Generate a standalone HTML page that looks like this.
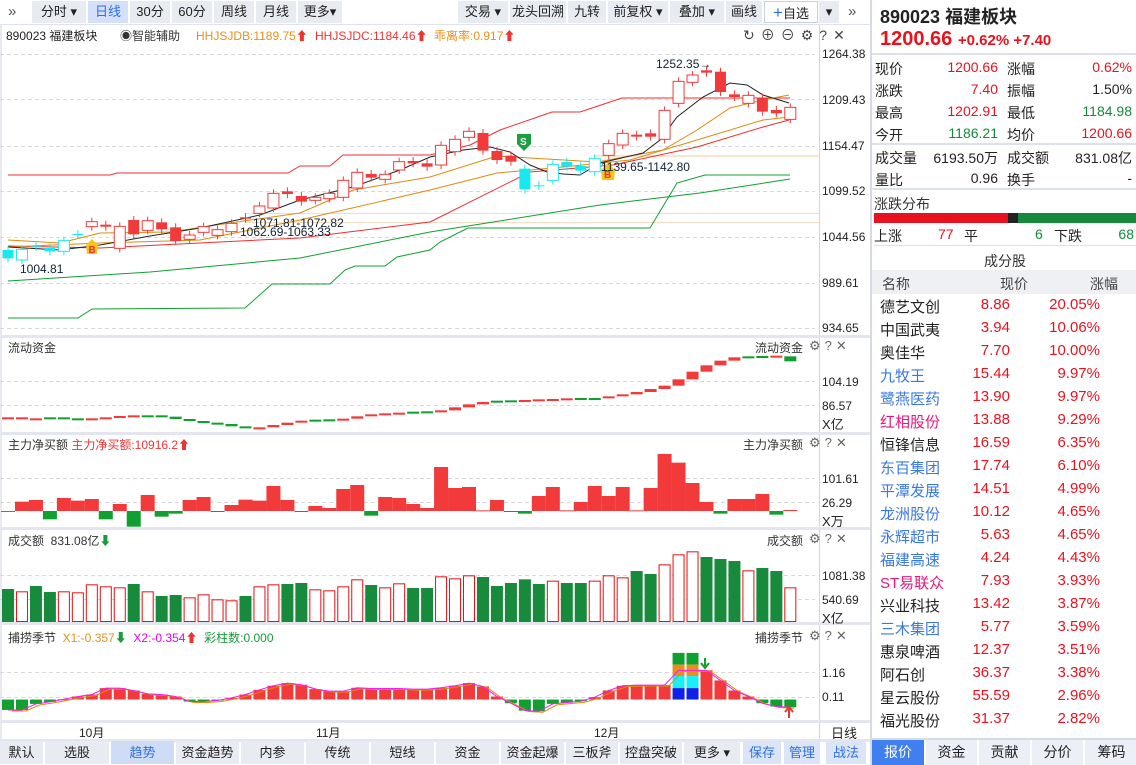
<!DOCTYPE html>
<html><head><meta charset="utf-8">
<style>
*{margin:0;padding:0;box-sizing:border-box}
body{width:1136px;height:765px;overflow:hidden;background:#fff;font-family:"Liberation Sans","Noto Sans CJK SC",sans-serif;font-size:13px;color:#222;position:relative}
.a{position:absolute;white-space:nowrap}
#top{position:absolute;left:0;top:0;width:870px;height:25px;background:#fff;border-bottom:1px solid #dfe3ec}
.tb{position:absolute;top:1px;height:22px;line-height:22px;background:#e8ebf2;text-align:center;font-size:13px;color:#222}
#rp{position:absolute;left:870px;top:0;width:266px;height:765px;border-left:2px solid #d5dae6;background:#fff}
.r{position:absolute;font-size:14px}
.sep{position:absolute;left:0;width:266px;height:2px;background:#dde1ea}
.bt{position:absolute;top:741px;height:23px;line-height:23px;background:#e8ebf2;text-align:center;font-size:13px}
.ph{font-size:12px;color:#333}
</style></head><body>
<div id="top">
<div class="a" style="left:8px;top:3px;font-size:15px;color:#555">»</div>
<div class="tb" style="left:32px;width:54px">分时 ▾</div>
<div class="tb" style="left:88px;width:40px;background:#d3e0f7;color:#2f6fe0">日线</div>
<div class="tb" style="left:130px;width:40px">30分</div>
<div class="tb" style="left:172px;width:40px">60分</div>
<div class="tb" style="left:214px;width:40px">周线</div>
<div class="tb" style="left:256px;width:40px">月线</div>
<div class="tb" style="left:298px;width:44px">更多▾</div>
<div class="tb" style="left:458px;width:50px">交易 ▾</div>
<div class="tb" style="left:510px;width:56px">龙头回溯</div>
<div class="tb" style="left:568px;width:38px">九转</div>
<div class="tb" style="left:608px;width:60px">前复权 ▾</div>
<div class="tb" style="left:670px;width:54px">叠加 ▾</div>
<div class="tb" style="left:726px;width:36px">画线</div>
<div class="tb" style="left:764px;width:54px;background:#fff;border:1px solid #c8d0e0"><span style="color:#2f6fe0;font-size:17px">+</span>自选</div>
<div class="tb" style="left:819px;width:20px">▾</div>
<div class="a" style="left:848px;top:3px;font-size:15px;color:#555">»</div>
</div>
<div class="a ph" style="left:6px;top:27px;font-size:12px;color:#222">890023 福建板块</div>
<div class="a ph" style="left:120px;top:27px">◉智能辅助</div>
<div class="a" style="left:196px;top:27px;font-size:12px;color:#e8901a">HHJSJDB:1189.75<span style="color:#e33">⬆</span></div>
<div class="a" style="left:315px;top:27px;font-size:12px;color:#e33">HHJSJDC:1184.46⬆</div>
<div class="a" style="left:434px;top:27px;font-size:12px;color:#e8901a">乖离率:0.917<span style="color:#e33">⬆</span></div>
<div class="a" style="left:743px;top:25px;font-size:14px;color:#444;letter-spacing:6px">↻⊕⊖⚙?✕</div>

<svg id="ch" class="a" style="left:0;top:0" width="870" height="765" xmlns="http://www.w3.org/2000/svg"></svg>

<div class="a ph" style="left:8px;top:339px">流动资金</div>
<div class="a ph" style="left:755px;top:339px">流动资金</div>
<div class="a ph" style="left:8px;top:436px">主力净买额 <span style="color:#e33">主力净买额:10916.2⬆</span></div>
<div class="a ph" style="left:743px;top:436px">主力净买额</div>
<div class="a ph" style="left:8px;top:532px">成交额 &nbsp;831.08亿<span style="color:#1a9a3a">⬇</span></div>
<div class="a ph" style="left:767px;top:532px">成交额</div>
<div class="a ph" style="left:8px;top:629px">捕捞季节 &nbsp;<span style="color:#e8901a">X1:-0.357</span><span style="color:#1a9a3a">⬇</span> &nbsp;<span style="color:#e0e">X2:-0.354</span><span style="color:#e33">⬆</span> &nbsp;<span style="color:#1a9a3a">彩柱数:0.000</span></div>
<div class="a ph" style="left:755px;top:629px">捕捞季节</div>
<div class="a" style="left:809px;top:338px;font-size:13px;color:#666;letter-spacing:4px">⚙?✕</div>
<div class="a" style="left:809px;top:435px;font-size:13px;color:#666;letter-spacing:4px">⚙?✕</div>
<div class="a" style="left:809px;top:531px;font-size:13px;color:#666;letter-spacing:4px">⚙?✕</div>
<div class="a" style="left:809px;top:628px;font-size:13px;color:#666;letter-spacing:4px">⚙?✕</div>
<div class="a" style="left:822px;top:47px;font-size:12px">1264.38</div>
<div class="a" style="left:822px;top:93px;font-size:12px">1209.43</div>
<div class="a" style="left:822px;top:139px;font-size:12px">1154.47</div>
<div class="a" style="left:822px;top:184px;font-size:12px">1099.52</div>
<div class="a" style="left:822px;top:230px;font-size:12px">1044.56</div>
<div class="a" style="left:822px;top:276px;font-size:12px">989.61</div>
<div class="a" style="left:822px;top:321px;font-size:12px">934.65</div>
<div class="a" style="left:822px;top:375px;font-size:12px">104.19</div>
<div class="a" style="left:822px;top:399px;font-size:12px">86.57</div>
<div class="a" style="left:822px;top:414px;font-size:13px">X亿</div>
<div class="a" style="left:822px;top:472px;font-size:12px">101.61</div>
<div class="a" style="left:822px;top:496px;font-size:12px">26.29</div>
<div class="a" style="left:822px;top:511px;font-size:13px">X万</div>
<div class="a" style="left:822px;top:569px;font-size:12px">1081.38</div>
<div class="a" style="left:822px;top:593px;font-size:12px">540.69</div>
<div class="a" style="left:822px;top:608px;font-size:13px">X亿</div>
<div class="a" style="left:822px;top:666px;font-size:12px">1.16</div>
<div class="a" style="left:822px;top:690px;font-size:12px">0.11</div>
<div class="a" style="left:79px;top:724px;font-size:12px">10月</div>
<div class="a" style="left:316px;top:724px;font-size:12px">11月</div>
<div class="a" style="left:594px;top:724px;font-size:12px">12月</div>
<div class="a" style="left:831px;top:723px;font-size:13px">日线</div>
<div class="a" style="left:20px;top:262px;font-size:12px;color:#123">1004.81</div>
<div class="a" style="left:253px;top:216px;font-size:12px;color:#123">1071.81-1072.82</div>
<div class="a" style="left:240px;top:225px;font-size:12px;color:#123">1062.69-1063.33</div>
<div class="a" style="left:601px;top:160px;font-size:12px;color:#123">1139.65-1142.80</div>
<div class="a" style="left:656px;top:57px;font-size:12px;color:#123">1252.35→</div>

<div class="bt" style="left:0;width:43px">默认</div>
<div class="bt" style="left:45px;width:64px">选股</div>
<div class="bt" style="left:111px;width:63px;background:#cfdcf5;color:#2f6fe0">趋势</div>
<div class="bt" style="left:176px;width:63px">资金趋势</div>
<div class="bt" style="left:241px;width:63px">内参</div>
<div class="bt" style="left:306px;width:63px">传统</div>
<div class="bt" style="left:371px;width:63px">短线</div>
<div class="bt" style="left:436px;width:63px">资金</div>
<div class="bt" style="left:501px;width:63px">资金起爆</div>
<div class="bt" style="left:566px;width:52px">三板斧</div>
<div class="bt" style="left:620px;width:62px">控盘突破</div>
<div class="bt" style="left:684px;width:56px">更多 ▾</div>
<div class="bt" style="left:743px;width:38px;background:#dbe5f7;color:#2f6fe0">保存</div>
<div class="bt" style="left:784px;width:36px;background:#dbe5f7;color:#2f6fe0">管理</div>
<div class="bt" style="left:826px;width:40px;background:#dbe5f7;color:#2f6fe0">战法</div>

<div id="rp">
<div class="r" style="left:8px;top:3px;font-size:18px;font-weight:bold">890023 福建板块</div>
<div class="r" style="left:8px;top:28px;font-size:20px;font-weight:bold;color:#e8121e">1200.66 <span style="font-size:15px">+0.62% +7.40</span></div>
<div class="sep" style="top:53px"></div>
<div class="r" style="left:3px;top:59px">现价</div><div class="r" style="right:138px;top:59px;color:#e8121e">1200.66</div>
<div class="r" style="left:135px;top:59px">涨幅</div><div class="r" style="right:4px;top:59px;color:#e8121e">0.62%</div>
<div class="r" style="left:3px;top:81px">涨跌</div><div class="r" style="right:138px;top:81px;color:#e8121e">7.40</div>
<div class="r" style="left:135px;top:81px">振幅</div><div class="r" style="right:4px;top:81px">1.50%</div>
<div class="r" style="left:3px;top:103px">最高</div><div class="r" style="right:138px;top:103px;color:#e8121e">1202.91</div>
<div class="r" style="left:135px;top:103px">最低</div><div class="r" style="right:4px;top:103px;color:#128a3a">1184.98</div>
<div class="r" style="left:3px;top:125px">今开</div><div class="r" style="right:138px;top:125px;color:#128a3a">1186.21</div>
<div class="r" style="left:135px;top:125px">均价</div><div class="r" style="right:4px;top:125px;color:#e8121e">1200.66</div>
<div class="sep" style="top:143px"></div>
<div class="r" style="left:3px;top:148px">成交量</div><div class="r" style="right:138px;top:148px">6193.50万</div>
<div class="r" style="left:135px;top:148px">成交额</div><div class="r" style="right:4px;top:148px">831.08亿</div>
<div class="r" style="left:3px;top:170px">量比</div><div class="r" style="right:138px;top:170px">0.96</div>
<div class="r" style="left:135px;top:170px">换手</div><div class="r" style="right:4px;top:170px">-</div>
<div class="sep" style="top:188px"></div>
<div class="r" style="left:2px;top:194px;color:#333">涨跌分布</div>
<div class="a" style="left:2px;top:213px;width:134px;height:10px;background:#e8121e"></div>
<div class="a" style="left:136px;top:213px;width:10px;height:10px;background:#222"></div>
<div class="a" style="left:146px;top:213px;width:118px;height:10px;background:#158a3c"></div>
<div class="r" style="left:2px;top:226px">上涨</div><div class="r" style="left:66px;top:226px;color:#e8121e">77</div>
<div class="r" style="left:92px;top:226px">平</div><div class="r" style="left:163px;top:226px;color:#128a3a">6</div>
<div class="r" style="left:182px;top:226px">下跌</div><div class="r" style="right:2px;top:226px;color:#128a3a">68</div>
<div class="sep" style="top:245px;left:2px;width:262px;height:1px"></div>
<div class="r" style="left:112px;top:251px;color:#333">成分股</div>
<div class="a" style="left:0;top:270px;width:266px;height:24px;background:#eef0f4"></div>
<div class="r" style="left:10px;top:274px;color:#444">名称</div>
<div class="r" style="left:128px;top:274px;color:#444">现价</div>
<div class="r" style="left:218px;top:274px;color:#444">涨幅</div>
<div id="stk"></div>
<div class="a" style="left:0;top:738px;width:266px;height:2px;background:#d5dae6"></div>
<div class="a" style="left:0;top:740px;width:52px;height:25px;line-height:25px;text-align:center;background:#3f7ff0;color:#fff;font-size:14px">报价</div>
<div class="a" style="left:54px;top:740px;width:51px;height:25px;line-height:25px;text-align:center;background:#eceff5;font-size:14px">资金</div>
<div class="a" style="left:107px;top:740px;width:51px;height:25px;line-height:25px;text-align:center;background:#eceff5;font-size:14px">贡献</div>
<div class="a" style="left:160px;top:740px;width:51px;height:25px;line-height:25px;text-align:center;background:#eceff5;font-size:14px">分价</div>
<div class="a" style="left:213px;top:740px;width:53px;height:25px;line-height:25px;text-align:center;background:#eceff5;font-size:14px">筹码</div>
</div>

<div class="a" style="left:8px;top:296px;width:0;height:0"></div>
<div id="hid" style="display:none">
德艺文创 中国武夷 奥佳华 九牧王 鹭燕医药 红相股份 恒锋信息 东百集团 平潭发展 龙洲股份 永辉超市 福建高速 ST易联众 兴业科技 三木集团 惠泉啤酒 阿石创 星云股份 福光股份
</div>
<script>
var S=[["德艺文创","8.86","20.05%",0],["中国武夷","3.94","10.06%",0],["奥佳华","7.70","10.00%",0],["九牧王","15.44","9.97%",1],["鹭燕医药","13.90","9.97%",1],["红相股份","13.88","9.29%",2],["恒锋信息","16.59","6.35%",0],["东百集团","17.74","6.10%",1],["平潭发展","14.51","4.99%",1],["龙洲股份","10.12","4.65%",1],["永辉超市","5.63","4.65%",1],["福建高速","4.24","4.43%",1],["ST易联众","7.93","3.93%",2],["兴业科技","13.42","3.87%",0],["三木集团","5.77","3.59%",1],["惠泉啤酒","12.37","3.51%",0],["阿石创","36.37","3.38%",0],["星云股份","55.59","2.96%",0],["福光股份","31.37","2.82%",0]];
var cc=["#222","#3a78e0","#e8157e"],h="";
S.forEach(function(s,i){var t=296+i*23;h+='<div class="r" style="left:8px;top:'+t+'px;font-size:15px;color:'+cc[s[3]]+'">'+s[0]+'</div><div class="r" style="right:126px;top:'+t+'px;font-size:15px;color:#e8121e">'+s[1]+'</div><div class="r" style="right:36px;top:'+t+'px;font-size:15px;color:#e8121e">'+s[2]+'</div>';});
document.getElementById('stk').innerHTML=h;

var o="",R="#f23a3a",G="#128a3a",C="#18e8f0";
function X(i){return 8+i*13.97;}
function line(pts,col,w){o+='<polyline fill="none" stroke="'+col+'" stroke-width="'+(w||1)+'" points="'+pts.map(function(p){return p[0]+','+p[1]}).join(' ')+'"/>';}
function rect(x,y,w,hh,f,s){o+='<rect x="'+x+'" y="'+y+'" width="'+w+'" height="'+Math.max(hh,1)+'" fill="'+f+'"'+(s?' stroke="'+s+'"':'')+'/>';}
function hl(y,x1,x2,col,d){o+='<line x1="'+x1+'" y1="'+y+'" x2="'+x2+'" y2="'+y+'" stroke="'+col+'"'+(d?' stroke-dasharray="4,3"':'')+'/>';}
// frames
o+='<line x1="819.5" y1="25" x2="819.5" y2="740" stroke="#cfd4de"/>';
o+='<line x1="1" y1="25" x2="1" y2="740" stroke="#cfd4de"/>';
[336,433,528,623,721,740].forEach(function(y){o+='<rect x="0" y="'+(y-1)+'" width="870" height="3" fill="#e3e6ee"/>';});
[54,99,146,191,237,283,328].forEach(function(y){hl(y+0.5,0,815,"#d9d9d9",1)});
hl(381.5,0,815,"#d9d9d9",1);hl(405.5,0,815,"#d9d9d9",1);
hl(478.5,0,815,"#d9d9d9",1);hl(502.5,0,815,"#d9d9d9",1);
hl(575.5,0,815,"#d9d9d9",1);hl(599.5,0,815,"#d9d9d9",1);
hl(672.5,0,815,"#d9d9d9",1);hl(697.5,0,815,"#d9d9d9",1);
// beige lines
hl(213.5,245,819,"#f6dcc4");hl(222.5,245,819,"#f6dcc4");
rect(593,155,226,2,"#fbe3cc");
// bands
line([[8,175],[110,175],[117,173],[288,173],[300,166],[330,166],[343,155],[430,155],[470,145],[500,130],[552,112],[580,112],[622,98],[790,98]],"#ee3030");
line([[8,281],[150,272],[300,258],[430,232],[600,205],[700,193],[790,179]],"#10a030");
line([[8,318],[78,318],[92,309],[245,308],[272,284],[330,284],[345,270],[355,266],[385,266],[397,257],[430,250],[440,242],[468,228],[650,228],[677,183],[705,175],[790,175]],"#10a030");
// MAs
line([[8,246],[100,248],[300,238],[430,222],[530,172],[613,165],[697,147],[763,127],[789,120]],"#ee3030");
line([[8,247],[100,243],[200,240],[300,220],[430,190],[497,173],[563,167],[630,160],[697,140],[763,120],[789,117]],"#e08a10");
line([[8,240],[60,243],[100,233],[170,232],[230,223],[300,213],[353,190],[430,177],[497,156],[530,158],[597,162],[663,150],[697,130],[730,108],[763,100],[789,95]],"#e08a10");
line([[8,247],[60,250],[100,245],[150,236],[200,228],[260,215],[300,200],[353,187],[400,170],[430,157],[463,150],[490,147],[510,152],[530,165],[547,172],[563,174],[580,175],[600,163],[643,153],[660,140],[677,117],[703,97],[730,83],[747,85],[763,95],[789,103]],"#222");
// candles: [topzy,botzy,type]; real y=50+zy/3
var K=[[600,625,'cf'],[598,630,'ch'],[589,591,'cf'],[594,604,'cf'],[572,604,'ch'],[552,554,'cf'],[515,530,'rh'],[524,530,'rf'],[529,595,'rh'],[510,553,'rf'],[512,541,'rh'],[517,538,'rf'],[532,573,'rf'],[555,568,'rh'],[530,547,'rh'],[539,556,'rh'],[520,545,'rh'],[502,506,'rf'],[468,490,'rh'],[430,474,'rh'],[424,432,'rf'],[438,455,'rf'],[442,451,'rh'],[430,446,'rh'],[391,442,'rh'],[367,414,'rh'],[372,383,'rf'],[373,388,'rh'],[335,360,'rh'],[333,340,'rf'],[340,350,'rf'],
[286,345,'rh'],[268,305,'rh'],[244,262,'rh'],[249,302,'rf'],[303,330,'rf'],[317,335,'rf'],[356,418,'cf'],[406,408,'cf'],[343,391,'ch'],[336,350,'cf'],[348,362,'cf'],[325,365,'ch'],[281,316,'rh'],[250,285,'rh'],[254,260,'rf'],[250,260,'rf'],[181,268,'rh'],[94,160,'rh'],[75,97,'rh'],[61,68,'rf'],[65,126,'rf'],[133,141,'rf'],[136,160,'rh'],[143,185,'rf'],[180,190,'rf'],[172,208,'rh']];
K.forEach(function(k,i){var x=X(i),t=50+k[0]/3,b=50+k[1]/3,col=k[2][0]=='r'?R:C;
o+='<line x1="'+x+'" y1="'+(t-4)+'" x2="'+x+'" y2="'+(b+4)+'" stroke="'+col+'"/>';
if(k[2][1]=='h')rect(x-5.5,t,11,b-t,"#fff",col);else rect(x-5.5,t,11,b-t,col);});
o+='<polygon points="86,245 92,239 98,245 97,254 87,254" fill="#f5c518"/><text x="88.5" y="253" font-size="10" fill="#e33" font-weight="bold">B</text>';
o+='<polygon points="601,170 608,163 615,170 614,180 602,180" fill="#f5c518"/><text x="604" y="178" font-size="10" fill="#e33" font-weight="bold">B</text>';
o+='<polygon points="517,134 531,134 531,144 524,151 517,144" fill="#1aa040"/><text x="520" y="145" font-size="10" fill="#fff" font-weight="bold">S</text>';
// 流动资金
var L=[250,253,253,250,253,256,253,250,246,244,244,248,255,261,266,270,277,283,280,273,266,260,257,256,254,247,241,238,236,233,232,229,220,211,204,200,199,198,196,195,193,192,192,187,181,174,165,155,136,113,94,80,70,67,66,65,75];
var GL=[3,4,5,10,11,12,13,14,15,16,17,22,23,29,30,35,36,41,42,53,54,56];
L.forEach(function(v,i){var y=335+v/3,p=i?335+L[i-1]/3:y,g=GL.indexOf(i)>=0;var t=Math.min(y,p),hh=Math.max(Math.abs(y-p),2);if(i==56){t=335+67/3;hh=5;}rect(X(i)-6,t-1,12,hh,g?"#10a030":R);});
// 主力净买额 zero 511
var M=[528,500,495,553,489,497,492,553,507,575,480,545,536,495,486,530,510,494,497,453,495,530,513,519,462,450,542,486,489,507,519,396,459,456,526,495,530,536,483,456,526,501,453,483,456,526,459,357,383,444,501,536,492,492,477,539,525];
M.forEach(function(v,i){var y=335+v/3,z=511;if(v>528)rect(X(i)-7,z,14,y-z,"#10a030");else rect(X(i)-7,y,14,z-y,R);});
// 成交额
var V=[[762,'G'],[769,'R'],[753,'G'],[771,'G'],[769,'R'],[772,'R'],[748,'R'],[754,'R'],[757,'R'],[747,'G'],[769,'R'],[783,'G'],[780,'G'],[787,'R'],[778,'R'],[793,'R'],[796,'R'],[783,'G'],[754,'R'],[748,'R'],[747,'G'],[744,'G'],[763,'R'],[766,'R'],[754,'R'],[733,'R'],[750,'G'],[757,'R'],[745,'R'],[759,'G'],[759,'G'],[724,'R'],[730,'R'],[721,'R'],[726,'G'],[753,'G'],[744,'G'],[733,'G'],[747,'G'],[737,'R'],[744,'G'],[744,'G'],[737,'R'],[721,'R'],[727,'R'],[708,'G'],[717,'G'],[688,'R'],[658,'R'],[649,'R'],[666,'G'],[672,'G'],[678,'G'],[706,'R'],[699,'G'],[708,'G'],[757,'R']];
V.forEach(function(v,i){var t=335+v[0]/3;if(v[1]=='G')rect(X(i)-6,t,12,622-t,"#178a3c");else rect(X(i)-5.5,t+0.5,11,621-t,"#fff","#e81010");});
// 捕捞季节
var B=[[268,'G'],[268,'G'],[250,'G'],[244,'G'],[236,'R'],[228,'R'],[222,'R'],[203,'R'],[203,'R'],[210,'R'],[220,'R'],[222,'R'],[228,'R'],[243,'G'],[243,'G'],[240,'G'],[232,'R'],[222,'R'],[208,'R'],[196,'R'],[188,'R'],[193,'R'],[206,'R'],[212,'R'],[212,'R'],[202,'R'],[204,'R'],[204,'R'],[204,'R'],[206,'R'],[206,'R'],[202,'R'],[196,'R'],[188,'R'],[198,'R'],[228,'R'],[248,'G'],[270,'G'],[272,'G'],[250,'G'],[246,'G'],[242,'G'],[230,'R'],[210,'R'],[196,'R'],[194,'R'],[194,'R'],[194,'R'],[98,'S'],[98,'S'],[150,'R'],[180,'R'],[210,'R'],[228,'R'],[248,'G'],[258,'G'],[260,'G']];
function by(z){return 620+z*0.3356;}var z0=by(237),pts=[],pts2=[];
B.forEach(function(b,i){var x=X(i),y=by(b[0]);
if(b[1]=='G')rect(x-6,z0,12,y-z0,"#10a030");
else if(b[1]=='R')rect(x-6,y,12,z0-y,R);
else{rect(x-6,by(98),12,by(133)-by(98),"#10a030");rect(x-6,by(133),12,by(167)-by(133),"#e8901a");rect(x-6,by(167),12,by(203)-by(167),"#18f0f8");rect(x-6,by(203),12,z0-by(203),"#1020e8");}
var yy=b[1]=='S'?by(150):y;pts.push([x,yy]);pts2.push([x+4,yy+1]);});
line(pts2,"#e08a10");line(pts,"#f020f0");
o+='<path d="M705,658 v8 M701,663 l4,5 l4,-5" stroke="#10a030" stroke-width="2" fill="none"/>';
o+='<path d="M789,718 v-9 M785,712 l4,-5 l4,5" stroke="#e33" stroke-width="2" fill="none"/>';
document.getElementById('ch').innerHTML=o;
</script>
</body></html>
